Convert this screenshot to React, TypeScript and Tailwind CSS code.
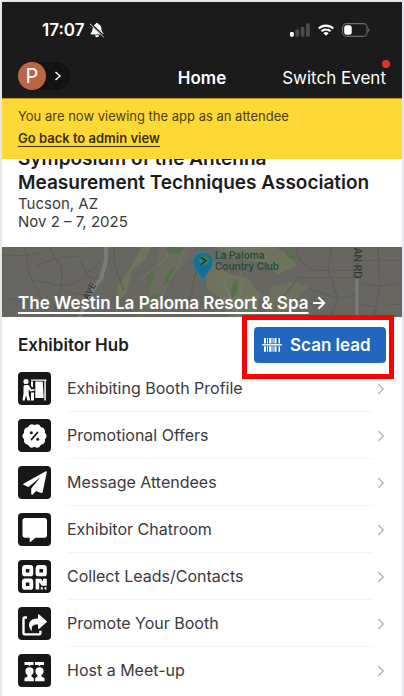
import type { ReactNode } from "react";
import { ArrowRight, ChevronRight } from "lucide-react";

type MenuItem = {
  label: string;
  icon: ReactNode;
};

const menuItems: MenuItem[] = [
  { label: "Exhibiting Booth Profile", icon: <BoothIcon /> },
  { label: "Promotional Offers", icon: <OfferIcon /> },
  { label: "Message Attendees", icon: <SendIcon /> },
  { label: "Exhibitor Chatroom", icon: <ChatIcon /> },
  { label: "Collect Leads/Contacts", icon: <QrIcon /> },
  { label: "Promote Your Booth", icon: <ShareIcon /> },
  { label: "Host a Meet-up", icon: <MeetupIcon /> },
];

export default function App() {
  return (
    <div className="min-h-screen border-t-2 border-r-2 border-l-2 border-gray-200 bg-white font-['Inter',sans-serif] text-[#1c1c1e]">
      <header className="bg-[#1b1b1b] text-white">
        <StatusBar />
        <NavBar />
      </header>
      <AdminBanner />
      <main>
        <EventInfo />
        <VenueMap />
        <ExhibitorHub />
      </main>
    </div>
  );
}

function StatusBar() {
  return (
    <div className="flex h-14 items-center justify-between pr-8 pl-10">
      <div className="flex items-center gap-1">
        <span className="text-[17px] leading-6 font-semibold">17:07</span>
        <svg viewBox="0 0 16 16" className="size-4" aria-hidden="true">
          <path
            d="M8 1c-.8 0-1.200.5-1.200 1.100C4.600 2.700 3.600 4.400 3.600 6.500c0 2.800-1 3.700-1.900 4.800-.4.600-.1 1.100.6 1.100h11.400c.7 0 1-.5.600-1.100-.9-1.100-1.900-2-1.900-4.800 0-2.100-1-3.800-3.200-4.400C9.200 1.500 8.800 1 8 1zM6 13.200a2 2 0 0 0 4 0z"
            fill="#fff"
          />
          <path d="M1.500 1.500l13.500 13" stroke="#1b1b1b" strokeWidth="2" />
          <path d="M1.200 2l13.200 12.800" stroke="#ddd" strokeWidth="1" strokeLinecap="round" />
        </svg>
      </div>
      <div className="flex items-center gap-2">
        <svg viewBox="0 0 21 14" className="h-3.5 w-5" aria-hidden="true">
          <rect x="0" y="9" width="4" height="5" rx="1.200" fill="#fff" />
          <rect x="5.600" y="6.500" width="4" height="7.500" rx="1.200" fill="#4a4a4a" />
          <rect x="11.200" y="3.500" width="4" height="10.500" rx="1.200" fill="#4a4a4a" />
          <rect x="16.800" y="0" width="4" height="14" rx="1.200" fill="#4a4a4a" />
        </svg>
        <svg viewBox="0 0 18 13" className="h-3 w-4" aria-hidden="true">
          <g fill="none" stroke="#fff" strokeWidth="2.300">
            <path d="M.900 4.900a11.500 11.500 0 0 1 16.200 0" />
            <path d="M3.900 8a7.200 7.200 0 0 1 10.200 0" />
          </g>
          <path d="M6 10.200a4.300 4.300 0 0 1 6 0L9 13z" fill="#fff" />
        </svg>
        <svg viewBox="0 0 28 14" className="h-3.5 w-7" aria-hidden="true">
          <rect x=".6" y=".6" width="24.500" height="12.800" rx="4" fill="none" stroke="#6d6d6d" strokeWidth="1.100" />
          <rect x="2.200" y="2.200" width="7.500" height="9.600" rx="2.500" fill="#fff" />
          <path d="M26.300 4.800c1.700.7 1.700 3.700 0 4.400z" fill="#6d6d6d" />
        </svg>
      </div>
    </div>
  );
}

function NavBar() {
  return (
    <nav className="grid h-10 grid-cols-3 items-center px-4 pb-1">
      <button
        type="button"
        aria-label="Account"
        className="flex h-7 w-13 items-center gap-2 justify-self-start rounded-full bg-[#121212]"
      >
        <span className="flex size-7 items-center justify-center rounded-full bg-[#bb6544] text-xl leading-6">
          P
        </span>
        <svg viewBox="0 0 8 10" className="h-2.5 w-2" aria-hidden="true">
          <path d="M1.500 1l4.500 4-4.500 4" fill="none" stroke="#fff" strokeWidth="1.500" />
        </svg>
      </button>
      <h1 className="justify-self-center pt-1 text-[17px] leading-6 font-semibold">Home</h1>
      <button type="button" className="relative justify-self-end pt-1 text-[17px] leading-6 whitespace-nowrap">
        Switch Event
        <span className="absolute -top-0.5 -right-1 size-2 rounded-full bg-[#dc3531]" />
      </button>
    </nav>
  );
}

function AdminBanner() {
  return (
    <div className="relative z-10 border-t border-[#b9902a] bg-[#fed834] px-4 pt-1.5 pb-2.5 text-[13px] text-[#4a3f12]">
      <p className="leading-[22px]">You are now viewing the app as an attendee</p>
      <a href="#admin" className="block w-fit leading-[22px] font-semibold text-[#3b3110] underline underline-offset-3">
        Go back to admin view
      </a>
    </div>
  );
}

function EventInfo() {
  return (
    <section className="-mt-3 px-4 pb-4 text-[#3a3a3c]">
      <h2 className="text-[19px] leading-6 font-semibold text-[#1c1c1e]">
        Symposium of the Antenna
        <br />
        Measurement Techniques Association
      </h2>
      <p className="text-[15px] leading-[18px]">Tucson, AZ</p>
      <p className="text-[15px] leading-[18px]">Nov 2 – 7, 2025</p>
    </section>
  );
}

function VenueMap() {
  return (
    <section className="relative h-[70px] overflow-hidden bg-[#686661]">
      <svg
        viewBox="0 0 400 71"
        preserveAspectRatio="xMidYMid slice"
        className="absolute inset-0 size-full"
        aria-hidden="true"
      >
        <rect width="400" height="71" fill="#686661" />
        <g fill="#70745c">
          <path d="M140 0h10l-8 14-12 10-6 24-10 8 2-16 12-18z" />
          <path d="M158 0h34l-6 12-18 22-10 20-18 17h-8l14-20 6-24z" opacity=".5" />
          <path d="M206 10l22 18 18 3 12 18-4 22h-28l-8-20-14-10z" />
          <path d="M212 0h60l18 10 4 10-18 8-10-10-30-6z" />
          <path d="M270 40l22-6 14 6-16 18-8 13h-20z" opacity=".7" />
        </g>
        <g fill="#56704b">
          <path d="M164 2c6-4 14-2 18 1l-4 4c-6 1-12 0-14-5z" />
          <path d="M152 24c-6 4-7 10-8 18 6-2 9-10 8-18z" />
          <path d="M173 20c-6 4-10 11-11 19 8-1 12-11 11-19z" />
          <path d="M158 46c-7 1-12 5-17 10 8 1 15-4 17-10z" />
          <path d="M234 32c-4 6-6 13-4 20 5-4 8-13 4-20z" />
          <path d="M284 3l10 5-2 6-9-5z" />
        </g>
        <g fill="none" stroke="#5e5d59" strokeWidth="1.200">
          <path d="M22 0c6 12 2 24 8 34s12 12 8 37M0 8c14 2 26 2 38-2M34 20c14-8 26-10 42-10" />
          <path d="M30 34c16 0 24 8 38 4s16-14 26-18M48 0c2 14 12 14 12 28s-4 22-10 43" />
          <path d="M4 50c12 8 24 2 36 10M60 44c12 4 22 2 28 8M78 14l8 16 14 4" />
          <path d="M112 0c-2 20 6 32 10 44M196 20c-6 14-4 30-14 44M270 71c4-16 16-24 26-40h58" />
          <path d="M294 0c0 10 8 22 20 24h40M306 42l30 10 18-4M330 0l-4 24 10 28-8 19M300 60l24-8" />
          <path d="M357 14h43M357 36l20 4 23-4M376 0l2 40-6 31M386 58h14M357 58l16 2" />
        </g>
        <g fill="none" stroke="#777671" strokeWidth="1">
          <path d="M138 34c8-10 22-14 28-26M182 4c-6 20-18 30-22 48M226 0l14 30-4 41M250 40l22 20" />
        </g>
        <path d="M104 0v14l-5 18-10 14-12 25" fill="none" stroke="#7b7b7c" strokeWidth="4" />
        <path d="M221 32l10 26 8 13" fill="none" stroke="#77777a" strokeWidth="2.500" />
        <path d="M355 32v39" fill="none" stroke="#7b7b7c" strokeWidth="3" />
        <g fontFamily="Inter, sans-serif" fontWeight="500">
          <text x="86" y="54" fontSize="9" fill="#333" transform="rotate(-62 86 54)">AVE</text>
          <text x="352" y="1" fontSize="10" fill="#333" transform="rotate(90 352 1)">AN RD</text>
          <text x="213" y="12" fontSize="10" fontWeight="600" fill="#234f36">La Paloma</text>
          <text x="213" y="23" fontSize="10" fontWeight="600" fill="#234f36">Country Club</text>
        </g>
        <path
          d="M201 35c-1-6-10-12-10-20a10 9 0 0 1 20 0c0 8-9 14-10 20z"
          fill="#176c91"
          stroke="#2583a3"
          strokeWidth="1"
        />
        <circle cx="202" cy="14" r="5" fill="#348062" />
        <path d="M199 11l5 3-5 4" fill="none" stroke="#163d2c" strokeWidth="1.500" />
      </svg>
      <a
        href="#venue"
        className="absolute bottom-0.5 left-4 flex items-center gap-0.5 text-[17px] leading-6 font-semibold text-white"
      >
        <span className="underline decoration-2 underline-offset-3">The Westin La Paloma Resort &amp; Spa</span>
        <ArrowRight className="size-[18px]" strokeWidth={2.5} />
      </a>
    </section>
  );
}

function ExhibitorHub() {
  return (
    <section className="px-4">
      <div className="flex h-12 items-center justify-between pt-2">
        <h2 className="text-[17px] leading-6 font-semibold">Exhibitor Hub</h2>
        <div className="relative">
          <button
            type="button"
            className="flex h-9 w-[132px] items-center gap-2 rounded bg-[#2166bf] pl-2 text-[17px] leading-6 font-semibold text-white"
          >
            <BarcodeIcon />
            Scan lead
          </button>
          <span className="pointer-events-none absolute -top-3 -right-2 -bottom-4 -left-3 border-[5px] border-[#fe0000]" />
        </div>
      </div>
      <ul>
        {menuItems.map((item) => (
          <li key={item.label} className="group">
            <a href="#hub" className="flex h-[47px] items-center gap-4">
              <span className="flex size-[33px] shrink-0 items-center justify-center rounded bg-[#171717] text-white">
                {item.icon}
              </span>
              <span className="flex h-full grow items-center border-b border-gray-100 text-base leading-6 text-[#3a3a3c] group-last:border-transparent">
                {item.label}
              </span>
              <ChevronRight className="-mr-1 -ml-4 size-[18px] shrink-0 text-[#b5b5b5]" strokeWidth={2} />
            </a>
          </li>
        ))}
      </ul>
    </section>
  );
}

function BarcodeIcon() {
  return (
    <svg viewBox="0 0 20 16" className="h-4 w-5" aria-hidden="true">
      <path d="M0 7.800h20" stroke="currentColor" strokeWidth="1.400" />
      <path
        d="M2 1h2v5.500H2zM5 1h1v5.500H5zM7 1h2.500v5.500H7zM10.500 1h1v5.500h-1zM12.500 1h2v5.500h-2zM16.500 1H18v5.500h-1.500zM2 9.200h2v5.500H2zM5 9.200h1v5.500H5zM7 9.200h2.500v5.500H7zM10.500 9.200h1v5.500h-1zM12.500 9.200h2v5.500h-2zM16.500 9.200H18v5.500h-1.500z"
        fill="currentColor"
      />
    </svg>
  );
}

function BoothIcon() {
  return (
    <svg viewBox="0 0 33 33" className="size-full" aria-hidden="true">
      <g fill="currentColor">
        <circle cx="8" cy="9.500" r="2.600" />
        <path d="M6.500 13h4l3 4.500 3-.5.300 1.500-4.300 1-1.800-2v4.300l1.500 6.700H9.500L8 23.500l-1.300 5H4.500l1-7V14.500z" />
        <path d="M13 7.500h15.500v1.300H27.800v19.700h-1.500V8.800H13z" />
        <path d="M13 9.500h2v6l-2-1.500zM13 20.500h3v8h-3zM17.300 9.500h7.400l1 16.500H17.300z" />
      </g>
    </svg>
  );
}

function OfferIcon() {
  return (
    <svg viewBox="0 0 33 33" className="size-full" aria-hidden="true">
      <circle cx="16.500" cy="17" r="11" fill="currentColor" />
      <circle
        cx="16.500"
        cy="17"
        r="9"
        fill="none"
        stroke="currentColor"
        strokeWidth="6"
        strokeLinecap="round"
        pathLength="100"
        strokeDasharray="0.100 9.900"
      />
      <path d="M13.500 20.500l6-7" stroke="#171717" strokeWidth="1.800" strokeLinecap="round" />
      <circle cx="13.300" cy="13.700" r="1.500" fill="#171717" />
      <circle cx="19.700" cy="20.300" r="1.500" fill="#171717" />
    </svg>
  );
}

function SendIcon() {
  return (
    <svg viewBox="0 0 33 33" className="size-full" aria-hidden="true">
      <path
        d="M27.800 5.300L5.800 17.400c-.8.500-.7 1.400.1 1.700l4.600 2L22.600 11l-9.400 11.500v5.300c0 1 1 1.300 1.700.6l3-3.500 5.200 2.100c.8.300 1.500 0 1.600-.9L28.800 6c.1-.7-.4-1-1-.7z"
        fill="currentColor"
      />
    </svg>
  );
}

function ChatIcon() {
  return (
    <svg viewBox="0 0 33 33" className="size-full" aria-hidden="true">
      <path
        d="M7 5h19.500c1.500 0 2.500 1.100 2.500 2.500v14.800c0 1.400-1 2.500-2.500 2.500h-9l-4.800 4c-.6.500-1 .2-1-.5v-3.500H7c-1.500 0-2.500-1.100-2.500-2.500V7.500C4.500 6.100 5.500 5 7 5z"
        fill="currentColor"
      />
    </svg>
  );
}

function QrIcon() {
  return (
    <svg viewBox="0 0 33 33" className="size-full" aria-hidden="true">
      <g fill="none" stroke="currentColor" strokeWidth="3.800">
        <rect x="5.900" y="7" width="7.400" height="7.400" rx="1" />
        <rect x="19.500" y="7" width="7.400" height="7.400" rx="1" />
        <rect x="5.900" y="20.500" width="7.400" height="7.400" rx="1" />
      </g>
      <path
        d="M17.600 18.800h5.400l2 2.700v-2.700h3.800v7h-5l-2.600-3.500v7.200h-3.600zM22.800 27.200h2v2.300h-2zM26.500 27.200h2v2.300h-2z"
        fill="currentColor"
      />
    </svg>
  );
}

function ShareIcon() {
  return (
    <svg viewBox="0 0 33 33" className="size-full" aria-hidden="true">
      <path d="M9 10.500H6.700c-.8 0-1.200.5-1.200 1.200v14.500c0 .8.500 1.200 1.200 1.200h14.500c.8 0 1.200-.5 1.200-1.200v-2.500" fill="none" stroke="currentColor" strokeWidth="2.400" />
      <path
        d="M20 8.200c0-.8.600-1.100 1.200-.6l7.300 6.400c.4.400.4.900 0 1.200l-7.300 6.500c-.6.500-1.200.2-1.200-.6v-3.600c-5.200 0-6.700 1.500-6 5.200.2 1-.5 1.200-1.100.4-3.900-5-2-11.500 7.100-11.500z"
        fill="currentColor"
      />
    </svg>
  );
}

function MeetupIcon() {
  return (
    <svg viewBox="0 0 33 33" className="size-full" aria-hidden="true">
      <g fill="currentColor">
        <path d="M6.500 8h9v3h-3L11.500 12.300 10.500 11h-4zM17 8h9v3h-3.500l-1 1.300-1-1.300H17z" />
        <path d="M11.500 13.200c2.600 0 4.100 1.600 4.100 4 0 1.700-.9 3.100-2.100 3.900v1.300l2.300 1.600v3.200H6.500V24l3-1.600v-1.300c-1.200-.8-2.100-2.200-2.100-3.900 0-2.400 1.500-4 4.100-4z" />
        <path d="M21.500 13.200c2.600 0 4.100 1.600 4.100 4 0 1.700-.9 3.100-2.100 3.900v1.300l3 1.600v3.200h-9.300V24l2.300-1.600v-1.300c-1.200-.8-2.100-2.200-2.100-3.900 0-2.400 1.500-4 4.100-4z" />
      </g>
    </svg>
  );
}
